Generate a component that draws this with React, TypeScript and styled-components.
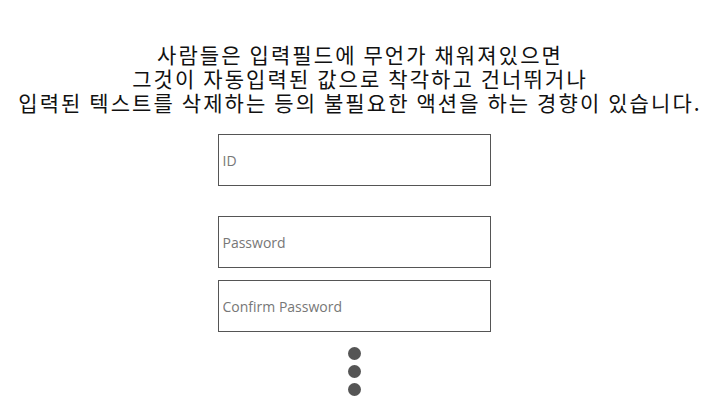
import styled, { createGlobalStyle } from "styled-components";

const GlobalStyle = createGlobalStyle`
  body {
    margin: 0;
    background: #fff;
    font-family: "Noto Sans CJK KR", "Noto Sans", sans-serif;
  }
`;

const Page = styled.div`
  width: 720px;
  height: 405px;
  display: flex;
  flex-direction: column;
  align-items: center;
  padding-top: 42px;
  box-sizing: border-box;
  overflow: hidden;
`;

const Message = styled.p`
  margin: 0 0 20px;
  font-size: 21px;
  line-height: 24px;
  color: #111;
  text-align: center;
  white-space: pre-line;
  letter-spacing: 2.1px;
`;

const Form = styled.form`
  display: flex;
  flex-direction: column;
  align-items: center;
  margin-right: 12px;
`;

const TextInput = styled.input<{ $gap?: number }>`
  width: 273px;
  height: 52px;
  box-sizing: border-box;
  border: 1px solid #555;
  border-radius: 0;
  padding: 0 4px;
  margin-bottom: ${(p) => p.$gap ?? 0}px;
  font-family: "Open Sans", "Noto Sans", sans-serif;
  font-size: 14px;
  outline: none;

  &::placeholder {
    color: #777;
  }
`;

const Dots = styled.div`
  display: flex;
  flex-direction: column;
  align-items: center;
  gap: 5px;
  margin-top: 15px;
  margin-right: 12px;
`;

const Dot = styled.span`
  width: 13px;
  height: 13px;
  border-radius: 50%;
  background: #555;
`;

export default function App() {
  return (
    <>
      <GlobalStyle />
      <Page>
        <Message>
          {"사람들은 입력필드에 무언가 채워져있으면\n그것이 자동입력된 값으로 착각하고 건너뛰거나\n입력된 텍스트를 삭제하는 등의 불필요한 액션을 하는 경향이 있습니다."}
        </Message>
        <Form>
          <TextInput placeholder="ID" $gap={30} />
          <TextInput type="password" placeholder="Password" $gap={12} />
          <TextInput type="password" placeholder="Confirm Password" />
        </Form>
        <Dots>
          <Dot />
          <Dot />
          <Dot />
        </Dots>
      </Page>
    </>
  );
}
